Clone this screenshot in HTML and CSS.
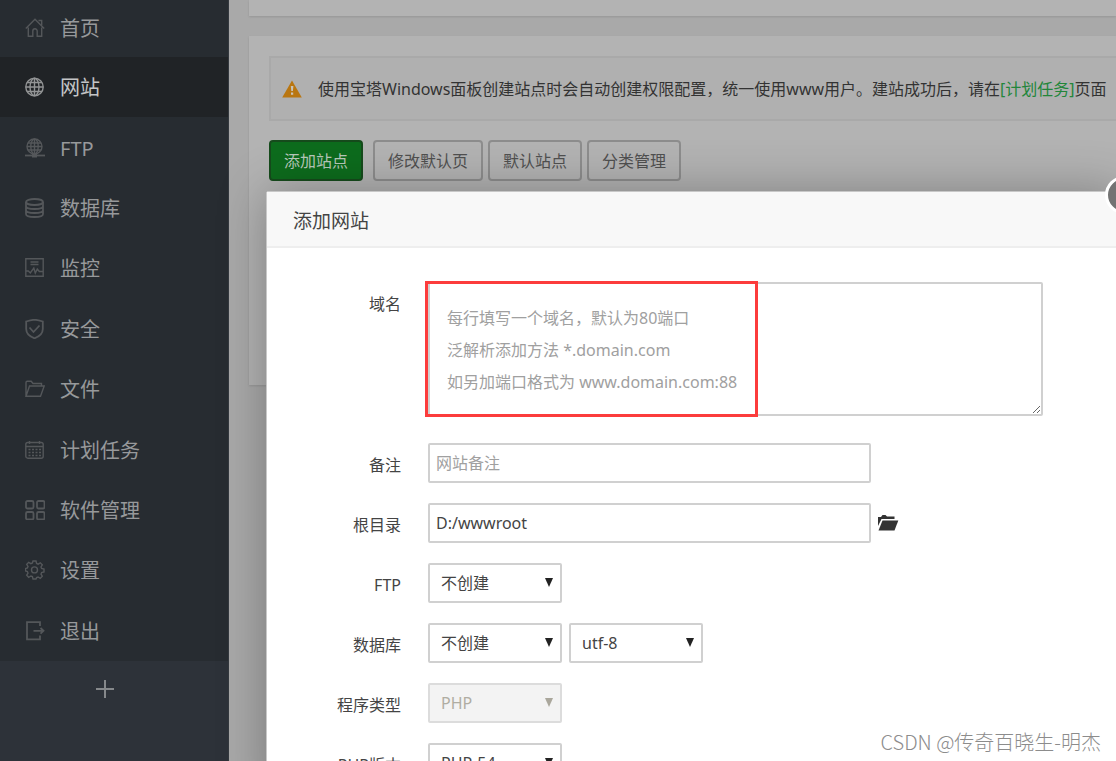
FILE: index.html
```html
<!DOCTYPE html>
<html lang="zh-CN">
<head>
<meta charset="utf-8">
<title>添加网站</title>
<link rel="stylesheet" href="styles.css">
</head>
<body>
<div class="app">
  <nav class="sidebar">
    <ul class="menu">
      <li><a href="#"><svg viewBox="0 0 20 20"><path d="M.8 10.5 10 1.300l9.200 9.200M13.500 2.500h3.200v4.800M3.300 9.500v8.700h4.500v-5.200a2.200 2.200 0 0 1 4.400 0v5.200h4.500V9.500"/></svg>首页</a></li>
      <li class="active"><a href="#"><svg viewBox="0 0 20 20"><circle cx="9.500" cy="10" r="8.700"/><ellipse cx="9.500" cy="10" rx="4.500" ry="8.700"/><path d="M9.500 1.300v17.400M.8 10h17.400M2 5.500h15M2 14.500h15"/></svg>网站</a></li>
      <li><a href="#"><svg viewBox="0 0 20 20"><circle cx="9.500" cy="8.500" r="7.500"/><ellipse cx="9.500" cy="8.500" rx="3.700" ry="7.500"/><path d="M9.500 1v15M2 8.500h15M3 5h13M3 12h13"/><path class="thick" d="M0 17.500h20"/><path class="knob" d="M7 17.500h5"/></svg>FTP</a></li>
      <li><a href="#"><svg class="bold" viewBox="0 0 20 20"><ellipse cx="9.500" cy="4" rx="8.500" ry="3"/><path d="M1 4v12c0 4 17 4 17 0V4M1 8c0 4 17 4 17 0M1 12c0 4 17 4 17 0"/></svg>数据库</a></li>
      <li><a href="#"><svg viewBox="0 0 20 20"><path d="M.8.8h17.400v17.400H.8zM5.500 4h8M5.500 6.500h8M.8 13h2.500l2 2 3.500-5 1.500 5 2-4 2 2.500h4"/></svg>监控</a></li>
      <li><a href="#"><svg viewBox="0 0 20 20"><path class="thick" d="M9.500.7C6.500 1 4 1.500 1.200 2.500V10c0 4.500 3.500 7.500 8.300 9.300 4.800-1.800 8.300-4.800 8.300-9.300V2.500C15 1.500 12.500 1 9.500.7zM4.500 8.500l4 4.500 6-6.500"/></svg>安全</a></li>
      <li><a href="#"><svg viewBox="0 0 20 20"><path d="M1 17.200V3.500q0-1.200 1.200-1.200h4L8 4.500h8.500V7M1 17.200h14.500L19.200 7H4.500z"/></svg>文件</a></li>
      <li><a href="#"><svg viewBox="0 0 20 20"><rect x=".8" y="2.500" width="17.400" height="15.700" rx="2"/><path d="M.8 6.500h17.400M4.500 1v3M14.500 1v3"/><path class="dots" d="M3.500 9.500h12.500M3.500 12.500h12.500M3.500 15.500h12.500"/></svg>计划任务</a></li>
      <li><a href="#"><svg class="bold" viewBox="0 0 20 20"><rect x="1" y="1" width="7.500" height="7.500" rx="1.500"/><rect x="12" y="1" width="7.500" height="7.500" rx="1.500"/><rect x="1" y="12" width="7.500" height="7.500" rx="1.500"/><rect x="12" y="12" width="7.500" height="7.500" rx="1.500"/></svg>软件管理</a></li>
      <li><a href="#"><svg viewBox="0 0 20 20"><path d="M8 1h3l.6 2.500 1.500.6 2.200-1.300 2 2-1.300 2.200.6 1.500 2.400.5v3l-2.400.6-.6 1.500 1.300 2.100-2 2.100-2.200-1.300-1.500.6L11 19H8l-.6-2.400-1.500-.6-2.200 1.300-2-2.100L3 13.100l-.6-1.500L.5 11V8.500L2.400 8 3 6.500 1.700 4.300l2-2 2.200 1.300 1.500-.6z"/><circle cx="9.500" cy="9.900" r="3"/></svg>设置</a></li>
      <li><a href="#"><svg viewBox="0 0 20 20"><path class="thick" d="M15 5V1.200H2v17.200h13v-3.800M8.500 9.800h10M15.500 7l3 2.800-3 2.800"/></svg>退出</a></li>
    </ul>
    <button class="add-menu" type="button" aria-label="添加菜单"><svg viewBox="0 0 18 18"><path d="M9 0v18M0 9h18"/></svg></button>
  </nav>
  <main class="content">
    <section class="card card-top"></section>
    <section class="card card-main">
      <div class="notice">
        <svg class="warn" viewBox="0 0 20 18"><path fill="#b97611" d="M10 .500 19.800 17.500H.2z"/><path fill="#c9c4ba" d="M8.800 6h2.600l-.5 5H9.300zM9 12.500h2.200v2.200H9z"/></svg>
        <p>使用宝塔Windows面板创建站点时会自动创建权限配置，统一使用www用户。建站成功后，请在<a href="#">[计划任务]</a>页面</p>
      </div>
      <div class="toolbar">
        <button class="btn btn-primary" type="button">添加站点</button>
        <button class="btn" type="button">修改默认页</button>
        <button class="btn" type="button">默认站点</button>
        <button class="btn" type="button">分类管理</button>
      </div>
    </section>
  </main>
</div>

<div class="dialog" role="dialog" aria-labelledby="dialog-title">
  <h2 class="dialog-title" id="dialog-title">添加网站</h2>
  <button class="dialog-close" type="button" aria-label="关闭"></button>
  <form class="form">
    <div class="row row-domain">
      <label for="domain">域名</label>
      <div class="domain-field">
        <textarea id="domain" placeholder="每行填写一个域名，默认为80端口&#10;泛解析添加方法 *.domain.com&#10;如另加端口格式为 www.domain.com:88"></textarea>
        <span class="highlight"></span>
      </div>
    </div>
    <div class="row">
      <label for="note">备注</label>
      <div class="fields"><input id="note" class="text" type="text" placeholder="网站备注"></div>
    </div>
    <div class="row">
      <label for="root">根目录</label>
      <div class="fields"><input id="root" class="text" type="text" value="D:/wwwroot">
        <button class="browse" type="button" aria-label="选择目录"><svg viewBox="0 0 20 16"><path d="M0 11V2h3l1.500-2h3L9 1.500h7.500V4H3.500z"/><path d="M4.500 5.500H20.300L16.500 15.500H.5z"/></svg></button></div>
    </div>
    <div class="row">
      <label for="ftp">FTP</label>
      <div class="fields"><span class="select"><select id="ftp"><option>不创建</option></select><svg viewBox="0 0 8 9"><path d="M0 0h8L4 9z"/></svg></span></div>
    </div>
    <div class="row">
      <label for="db">数据库</label>
      <div class="fields"><span class="select"><select id="db"><option>不创建</option></select><svg viewBox="0 0 8 9"><path d="M0 0h8L4 9z"/></svg></span>
        <span class="select"><select aria-label="编码"><option>utf-8</option></select><svg viewBox="0 0 8 9"><path d="M0 0h8L4 9z"/></svg></span></div>
    </div>
    <div class="row">
      <label for="type">程序类型</label>
      <div class="fields"><span class="select disabled"><select id="type" disabled><option>PHP</option></select><svg viewBox="0 0 8 9"><path d="M0 0h8L4 9z"/></svg></span></div>
    </div>
    <div class="row">
      <label for="php">PHP版本</label>
      <div class="fields"><span class="select"><select id="php"><option>PHP-54</option></select><svg viewBox="0 0 8 9"><path d="M0 0h8L4 9z"/></svg></span></div>
    </div>
  </form>
</div>
<div class="watermark">CSDN @传奇百晓生-明杰</div>
</body>
</html>
```
FILE: styles.css
```css
* { box-sizing: border-box; }

body {
  position: relative;
  height: 100vh;
  margin: 0;
  overflow: hidden;
  background: #a9a9a9;
  color: #444;
  font: 16px/24px "Noto Sans", "Noto Sans CJK SC", sans-serif;
}

button, input, select, textarea { font: inherit; color: inherit; }

.app { display: flex; height: 100%; }

/* Sidebar */
.sidebar {
  flex: 0 0 229px;
  background: #2d3239;
  border-right: 1px solid #34393f;
}

.menu {
  display: flex;
  flex-direction: column;
  height: 661px;
  margin: 0;
  padding: 0;
  list-style: none;
  background: #272c31;
}

.menu li { flex: 1; }
.menu li:first-child { flex: 0 0 57px; padding-bottom: 2px; }

.menu a {
  display: flex;
  align-items: center;
  gap: 15px;
  height: 100%;
  padding: 2px 0 0 25px;
  color: #97999b;
  font-size: 20px;
  text-decoration: none;
}

.menu svg {
  width: 20px;
  height: 20px;
  margin-bottom: 2px;
  fill: none;
  stroke: #54575a;
  stroke-width: 1.4;
}

.menu .thick, .menu .bold { stroke-width: 1.8; }
.menu .knob { stroke-width: 4; }
.menu .dots { stroke-width: 1.6; stroke-dasharray: 2 1.5; }
.menu .active { background: #202326; }
.menu .active a { color: #c4c5c6; }
.menu .active svg { stroke: #929495; }

.add-menu {
  display: block;
  margin: 19px auto 0 96px;
  padding: 0;
  border: 0;
  background: none;
}

.add-menu svg { display: block; width: 18px; height: 18px; stroke: #85888b; stroke-width: 2; }

/* Page behind the dialog */
.content { flex: 1; min-width: 0; padding-left: 20px; }
.card { background: #b3b3b3; box-shadow: 0 1px 2px #969696; }
.card-top { height: 16px; margin-bottom: 20px; }
.card-main { height: 349px; padding: 20px 0 0 20px; }

.notice {
  display: flex;
  align-items: center;
  gap: 16px;
  height: 65px;
  margin-right: -20px;
  padding-left: 11px;
  border: 2px solid #a9a9a9;
  background: #b0b0b0;
  color: #333;
  white-space: nowrap;
}

.notice p { margin: 0; }
.notice a { color: #22863a; text-decoration: none; }
.warn { flex: none; width: 20px; height: 18px; }

.toolbar { display: flex; gap: 5px; padding-top: 19px; }

.btn {
  height: 41px;
  padding: 0 13px;
  border: 2px solid #8d8d8d;
  border-radius: 4px;
  background: transparent;
  color: #505050;
}

.btn-primary {
  margin-right: 5px;
  border-color: #164b1c;
  background: #0d6c1d;
  color: #b8c8ba;
}

/* Dialog */
.dialog {
  position: absolute;
  top: 191px;
  right: -6px;
  bottom: -40px;
  left: 266px;
  border: 1px solid #c8c8c8;
  border-radius: 2px;
  background: #fff;
  box-shadow: 1px 1px 50px rgba(0, 0, 0, .3);
}

.dialog-title {
  margin: 0;
  padding: 15px 26px 11px;
  border-bottom: 2px solid #eee;
  background: #f8f8f8;
  color: #444;
  font-size: 19px;
  font-weight: 400;
  line-height: 28px;
}

.dialog-close {
  position: absolute;
  top: -16px;
  right: -22px;
  width: 38px;
  height: 38px;
  border: 3px solid #fff;
  border-radius: 50%;
  background: #737373;
}

.form { display: grid; gap: 20px; padding-top: 34px; }

.row {
  display: grid;
  grid-template-columns: 134px 1fr;
  column-gap: 27px;
}

.row label { padding-top: 10px; text-align: right; }
.row-domain { margin-bottom: 7px; }

.domain-field { position: relative; width: 615px; }

textarea {
  display: block;
  width: 100%;
  height: 134px;
  padding: 18px 17px;
  border: 2px solid #d0d0d0;
  border-radius: 2px;
  line-height: 32px;
  resize: both;
}

::placeholder { color: #a0a0a0; }

.highlight {
  position: absolute;
  top: -1px;
  left: -3px;
  width: 333px;
  height: 136px;
  border: 3px solid #fc3c3c;
  pointer-events: none;
}

.fields { display: flex; align-items: center; gap: 7px; }

.text {
  width: 443px;
  height: 40px;
  padding: 0 6px;
  border: 2px solid #d0d0d0;
  border-radius: 2px;
}

.browse { padding: 0; border: 0; background: none; }
.browse svg { display: block; width: 20px; height: 16px; fill: #333; overflow: visible; }

.select { position: relative; width: 134px; }

.select select {
  display: block;
  width: 100%;
  height: 40px;
  padding: 0 11px;
  border: 2px solid #d0d0d0;
  border-radius: 2px;
  background: #fff;
  appearance: none;
}

.select svg {
  position: absolute;
  top: 15px;
  right: 9px;
  width: 8px;
  height: 9px;
  fill: #222;
  pointer-events: none;
}

.disabled select { border-color: #dcdcdc; background: #f3f3f3; color: #b0ada2; opacity: 1; }
.disabled svg { fill: #aaa79c; }

.watermark {
  position: absolute;
  right: 15px;
  bottom: 5px;
  color: #8c8c8c;
  font-family: "Noto Sans CJK SC", sans-serif;
  font-size: 20px;
  font-weight: 300;
  line-height: 28px;
}
```
